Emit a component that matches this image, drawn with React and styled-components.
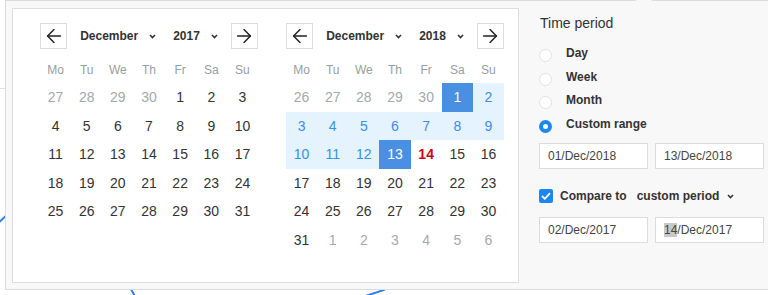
import React from 'react';
import styled, { createGlobalStyle } from 'styled-components';
import { ArrowLeft, ArrowRight } from 'lucide-react';

const GlobalStyle = createGlobalStyle`
  * { box-sizing: border-box; }
  body {
    margin: 0;
    font-family: "Liberation Sans", Arial, sans-serif;
    color: #333;
  }
`;

const Page = styled.div`
  position: relative;
  width: 768px;
  height: 295px;
  overflow: hidden;
  background: #fff;
`;

const ChartBehind = styled.svg`
  position: absolute;
  inset: 0;
`;

const Popover = styled.div`
  position: absolute;
  left: 5px;
  top: 0;
  width: 780px;
  height: 290px;
  display: flex;
  padding: 7px 0 6px 6px;
  border: 1px solid #dcdcdc;
  background: #f8f8f8;
`;

const Caret = styled.div`
  position: absolute;
  top: -7px;
  left: 632px;
  width: 12px;
  height: 12px;
  transform: rotate(45deg);
  background: #f8f8f8;
  border-left: 1px solid #dcdcdc;
  border-top: 1px solid #dcdcdc;
`;

const CalendarBox = styled.div`
  width: 507px;
  height: 275px;
  display: flex;
  gap: 28px;
  padding: 14px 0 0 27px;
  border: 1px solid #dedede;
  background: #fff;
`;

const Month = styled.div`
  width: 218px;
  display: flex;
  flex-direction: column;
`;

const Nav = styled.div`
  height: 26px;
  display: flex;
  align-items: center;
  justify-content: space-between;
`;

const NavButton = styled.button`
  width: 27px;
  height: 26px;
  padding: 0;
  display: flex;
  align-items: center;
  justify-content: center;
  border: 1px solid #dcdcdc;
  background: #fff;
  color: #222;
`;

const Selects = styled.div`
  display: flex;
  align-items: center;
  gap: 17px;
`;

const Select = styled.div`
  display: flex;
  align-items: center;
  gap: 11px;
  font-size: 12px;
  font-weight: bold;
  color: #333;
`;

const Weekdays = styled.div`
  margin-top: 8px;
  height: 26px;
  display: grid;
  grid-template-columns: repeat(7, 1fr);
  align-items: center;
  font-size: 12px;
  color: #96a0a0;
  text-align: center;
`;

const Days = styled.div`
  display: grid;
  grid-template-columns: repeat(7, 1fr);
  grid-auto-rows: 28.5px;
`;

const dayColors = {
  muted: '#a2aaaa',
  normal: '#333',
  range: '#3a8fe4',
  selected: '#fff',
  today: '#d0021b',
};

const Day = styled.div`
  display: flex;
  align-items: center;
  justify-content: center;
  font-size: 14px;
  color: ${p => dayColors[p.$kind]};
  font-weight: ${p => (p.$kind === 'today' ? 'bold' : 'normal')};
  background: ${p =>
    p.$kind === 'selected' ? '#4a90e2' : p.$kind === 'range' ? '#e4f3fd' : 'transparent'};
`;

const Side = styled.div`
  flex: 1;
  display: flex;
  flex-direction: column;
  padding: 7px 0 0 20px;
`;

const Title = styled.div`
  margin-left: 1px;
  font-size: 14px;
  line-height: 16px;
  color: #333;
`;

const Radios = styled.div`
  margin-top: 15px;
  display: flex;
  flex-direction: column;
  gap: 6.5px;
`;

const RadioRow = styled.label`
  height: 17px;
  display: flex;
  align-items: flex-start;
  gap: 14px;
  font-size: 12px;
  line-height: 14px;
  font-weight: bold;
  color: #333;
`;

const Radio = styled.span`
  width: 13px;
  height: 13px;
  margin-top: 3px;
  border-radius: 50%;
  background: #fff;
  border: ${p => (p.$checked ? '4px solid #1a87f0' : '1px solid #e2e2e2')};
`;

const InputRow = styled.div`
  margin-top: ${p => p.$top}px;
  display: flex;
  gap: 7px;
`;

const DateInput = styled.div`
  width: 109px;
  height: 26px;
  display: flex;
  align-items: center;
  padding-left: 8px;
  border: 1px solid #dcdcdc;
  background: #fff;
  font-size: 12px;
  color: #444;
`;

const Selection = styled.span`
  background: #c9c9c9;
`;

const CompareRow = styled.div`
  margin-top: 20px;
  height: 14px;
  display: flex;
  align-items: center;
  font-size: 12px;
  font-weight: bold;
  color: #333;
`;

const Checkbox = styled.span`
  width: 14px;
  height: 14px;
  margin-right: 7px;
  border-radius: 2px;
  background: #1a87f0;
  display: flex;
  align-items: center;
  justify-content: center;
`;

const PeriodSelect = styled.span`
  margin-left: 10px;
  display: flex;
  align-items: center;
  gap: 8px;
`;

const Chevron = () => (
  <svg width="7" height="5" viewBox="0 0 7 5">
    <path d="M1 1l2.5 2.5L6 1" fill="none" stroke="#333" strokeWidth="1.6" />
  </svg>
);

const weekdays = ['Mo', 'Tu', 'We', 'Th', 'Fr', 'Sa', 'Su'];

const dec2017 = [
  ...[27, 28, 29, 30].map(d => [d, 'muted']),
  ...Array.from({ length: 31 }, (_, i) => [i + 1, 'normal']),
];

const dec2018 = [
  ...[26, 27, 28, 29, 30].map(d => [d, 'muted']),
  ...Array.from({ length: 31 }, (_, i) => {
    const d = i + 1;
    if (d === 1 || d === 13) return [d, 'selected'];
    if (d < 13) return [d, 'range'];
    if (d === 14) return [d, 'today'];
    return [d, 'normal'];
  }),
  ...[1, 2, 3, 4, 5, 6].map(d => [d, 'muted']),
];

const MonthView = ({ month, year, days }) => (
  <Month>
    <Nav>
      <NavButton>
        <ArrowLeft size={22} strokeWidth={1.6} />
      </NavButton>
      <Selects>
        <Select>
          {month}
          <Chevron />
        </Select>
        <Select>
          {year}
          <Chevron />
        </Select>
      </Selects>
      <NavButton>
        <ArrowRight size={22} strokeWidth={1.6} />
      </NavButton>
    </Nav>
    <Weekdays>
      {weekdays.map(w => (
        <span key={w}>{w}</span>
      ))}
    </Weekdays>
    <Days>
      {days.map(([d, kind], i) => (
        <Day key={i} $kind={kind}>
          {d}
        </Day>
      ))}
    </Days>
  </Month>
);

const periods = [
  { label: 'Day' },
  { label: 'Week' },
  { label: 'Month' },
  { label: 'Custom range', checked: true },
];

export default function App() {
  return (
    <Page>
      <GlobalStyle />
      <ChartBehind width="768" height="295">
        <line x1="0" y1="88.5" x2="10" y2="88.5" stroke="#e2e2e2" />
        <polyline
          points="-5,226 60,165 136,298 260,330 384,290 470,160"
          fill="none"
          stroke="#2f80ed"
          strokeWidth="2"
        />
      </ChartBehind>
      <Popover>
        <Caret />
        <CalendarBox>
          <MonthView month="December" year="2017" days={dec2017} />
          <MonthView month="December" year="2018" days={dec2018} />
        </CalendarBox>
        <Side>
          <Title>Time period</Title>
          <Radios>
            {periods.map(p => (
              <RadioRow key={p.label}>
                <Radio $checked={p.checked} />
                {p.label}
              </RadioRow>
            ))}
          </Radios>
          <InputRow $top={9.5}>
            <DateInput>01/Dec/2018</DateInput>
            <DateInput>13/Dec/2018</DateInput>
          </InputRow>
          <CompareRow>
            <Checkbox>
              <svg width="10" height="8" viewBox="0 0 10 8">
                <path d="M1 4l2.8 2.8L9 1.2" fill="none" stroke="#fff" strokeWidth="1.8" />
              </svg>
            </Checkbox>
            Compare to
            <PeriodSelect>
              custom period
              <Chevron />
            </PeriodSelect>
          </CompareRow>
          <InputRow $top={14}>
            <DateInput>02/Dec/2017</DateInput>
            <DateInput>
              <Selection>14</Selection>/Dec/2017
            </DateInput>
          </InputRow>
        </Side>
      </Popover>
    </Page>
  );
}
